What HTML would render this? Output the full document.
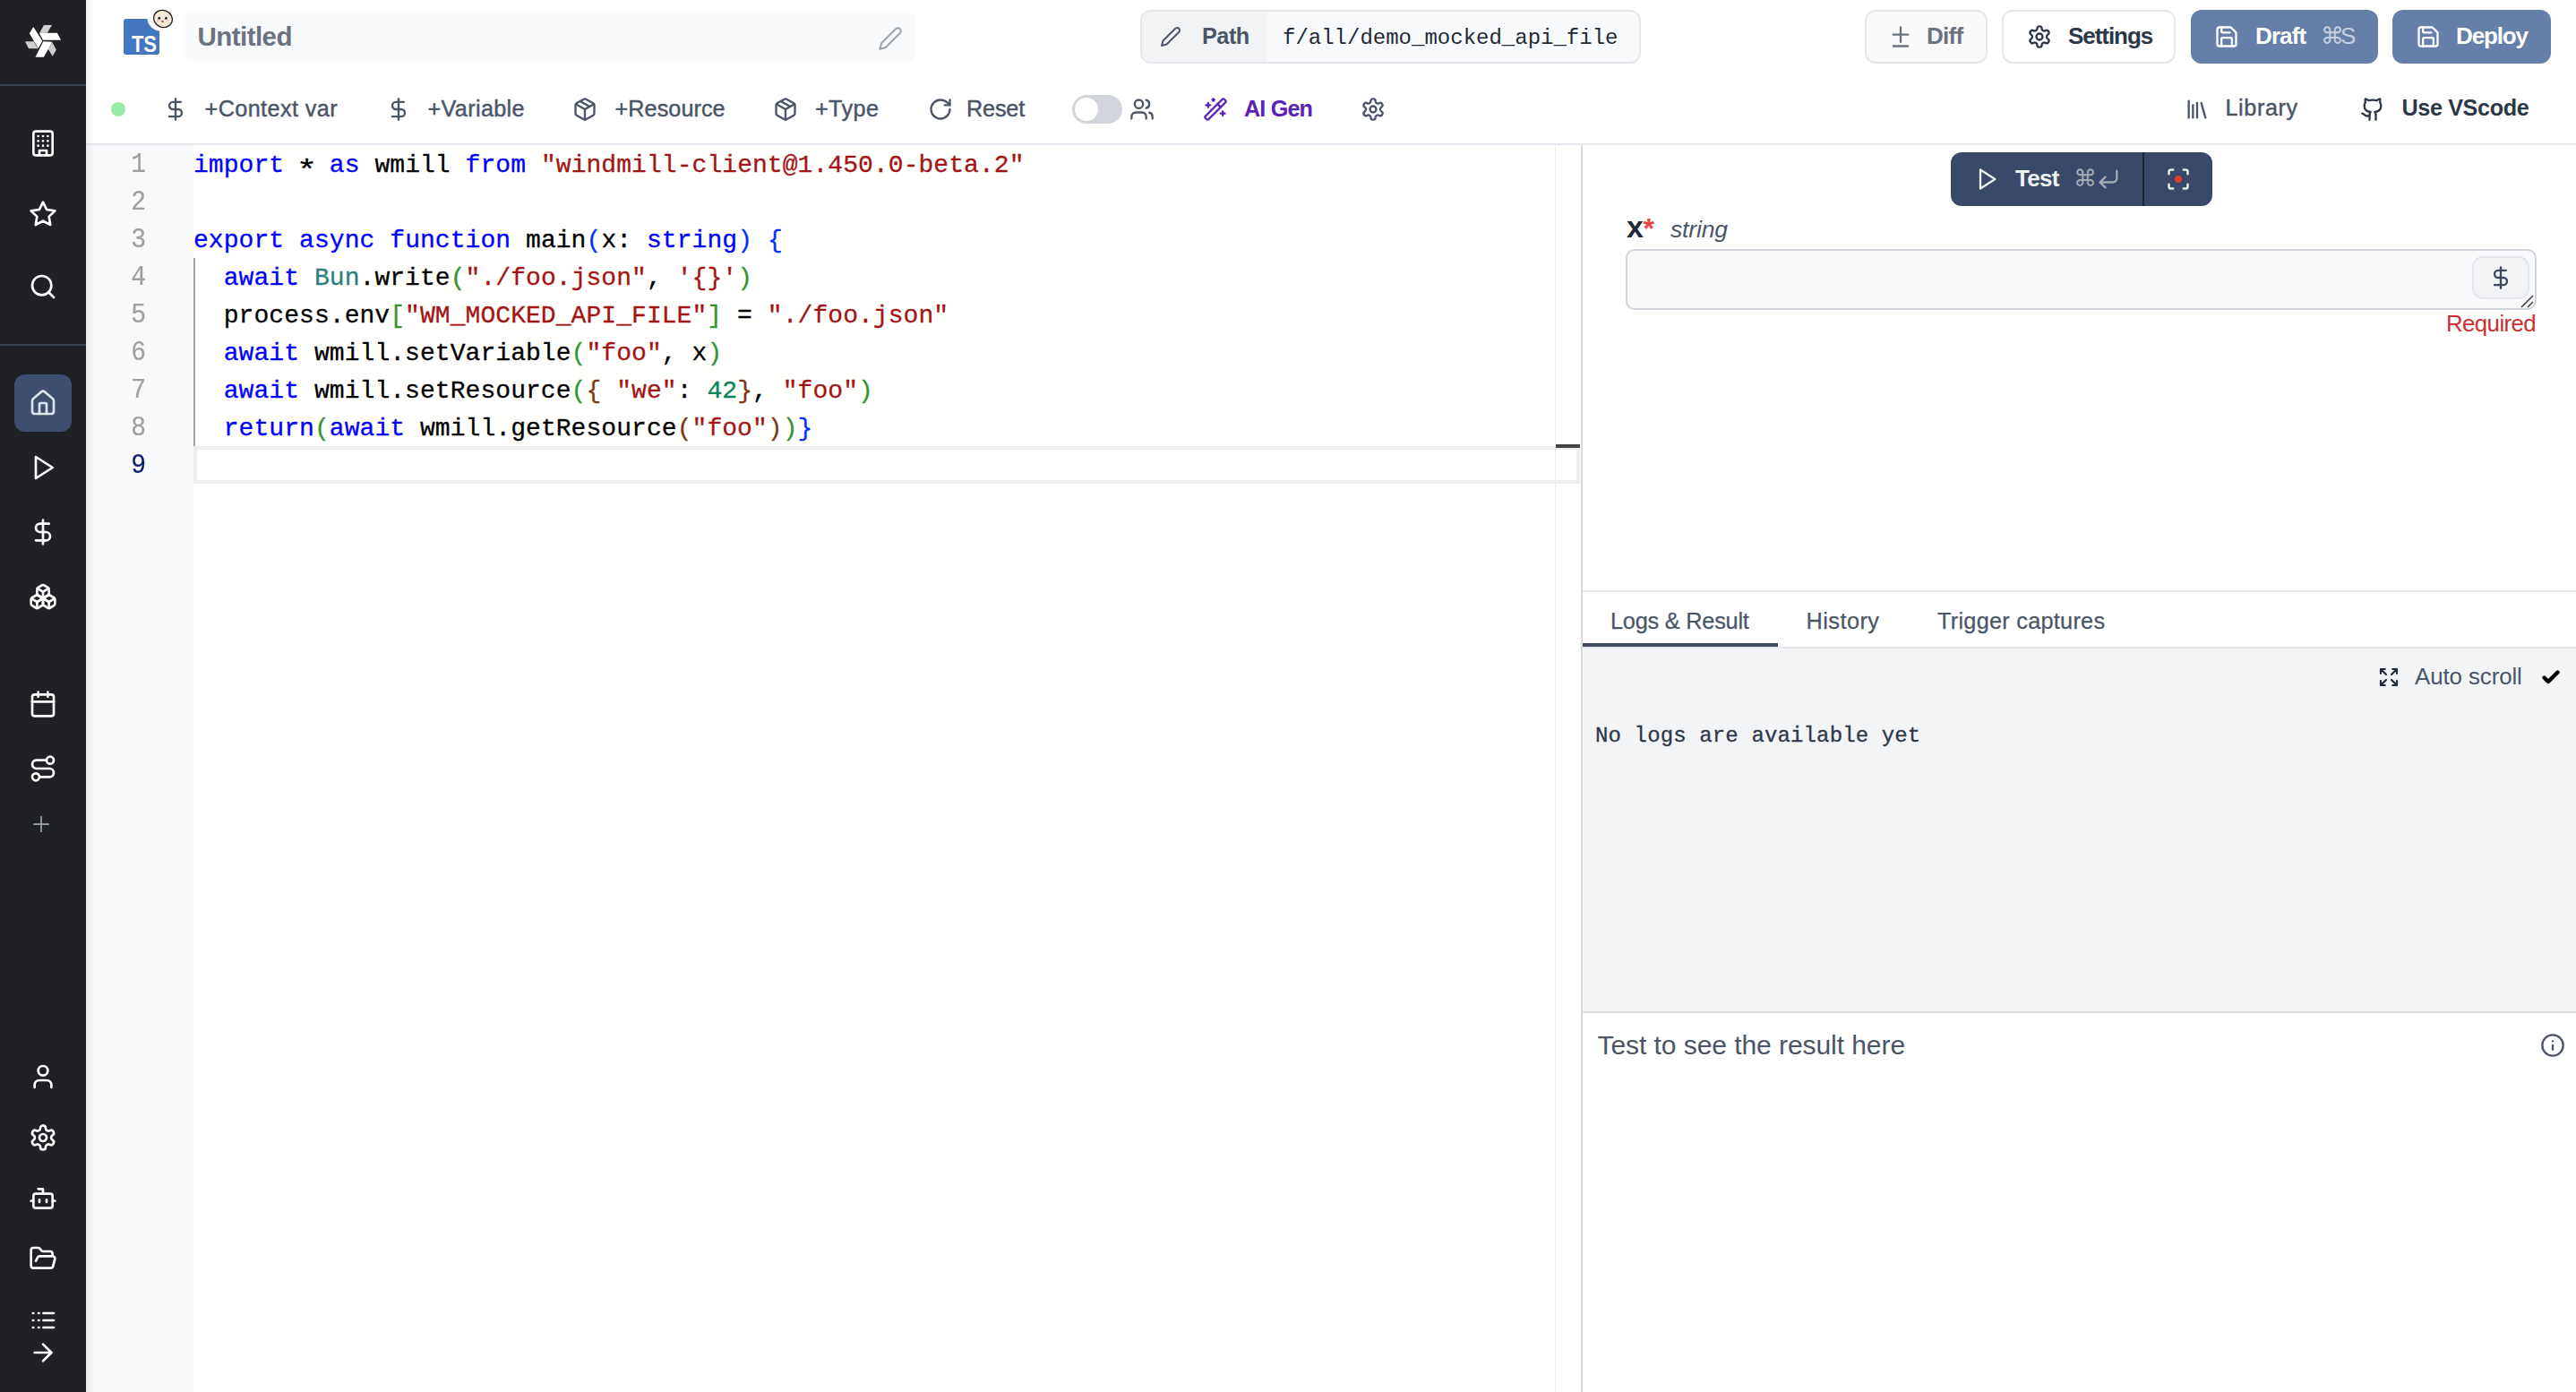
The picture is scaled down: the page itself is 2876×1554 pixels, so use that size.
<!DOCTYPE html>
<html><head><meta charset="utf-8">
<style>
*{box-sizing:border-box;margin:0;padding:0}
html,body{width:2876px;height:1554px;overflow:hidden;background:#fff;font-family:"Liberation Sans",sans-serif}
.a{position:absolute}
.t{position:absolute;white-space:nowrap;line-height:1}
.m{font-family:"Liberation Mono",monospace}
svg.i{position:absolute;fill:none;stroke:currentColor;stroke-linecap:round;stroke-linejoin:round}
#side{left:0;top:0;width:96px;height:1554px;background:#202125;box-shadow:2px 0 10px rgba(0,0,0,.08)}
.sep{position:absolute;left:0;width:96px;height:2px;background:#39404e}
.code{position:absolute;left:216px;font-family:"Liberation Mono",monospace;font-size:28px;line-height:42px;white-space:pre;color:#000;letter-spacing:0.06px;-webkit-text-stroke:0.3px currentColor}
.ln{position:absolute;left:96px;width:67px;text-align:right;font-family:"Liberation Mono",monospace;font-size:28px;line-height:42px;color:#a0a0a0;transform:scaleY(1.14);transform-origin:0 30px;-webkit-text-stroke:0.2px currentColor}
.k{color:#0000ff}.s{color:#a31515}.g{color:#319331}.b{color:#0431fa}.br{color:#7b3814}.n{color:#098658}.ty{color:#2e7f80}
</style></head><body>
<!-- sidebar -->
<div id="side" class="a">
  <svg class="a" style="left:24px;top:24px" width="48" height="44" viewBox="0 0 1519 1392">
    <polygon fill="#fff" points="420,190 740,690 590,950 280,420"/>
    <polygon fill="#cfcfcf" points="790,125 1075,125 910,400 640,400"/>
    <polygon fill="#fff" points="625,405 1260,405 1395,660 760,660"/>
    <polygon fill="#fff" points="770,700 1095,720 785,1260 490,1260"/>
    <polygon fill="#cfcfcf" points="1090,740 1230,1000 1095,1230 945,975"/>
    <polygon fill="#cfcfcf" points="125,700 430,700 580,955 255,955"/>
  </svg>
  <div class="sep" style="top:94px"></div>
  <svg class="i" style="left:32px;top:144px;color:#fff" width="32" height="32" viewBox="0 0 24 24" stroke-width="2"><rect width="16" height="20" x="4" y="2" rx="2" ry="2"/><path d="M9 22v-4h6v4"/><path d="M8 6h.01"/><path d="M16 6h.01"/><path d="M12 6h.01"/><path d="M12 10h.01"/><path d="M12 14h.01"/><path d="M16 10h.01"/><path d="M16 14h.01"/><path d="M8 10h.01"/><path d="M8 14h.01"/></svg>
  <svg class="i" style="left:32px;top:223px;color:#fff" width="32" height="32" viewBox="0 0 24 24" stroke-width="2"><polygon points="12 2 15.09 8.26 22 9.27 17 14.14 18.18 21.02 12 17.77 5.82 21.02 7 14.14 2 9.27 8.91 8.26 12 2"/></svg>
  <svg class="i" style="left:32px;top:304px;color:#fff" width="32" height="32" viewBox="0 0 24 24" stroke-width="2"><circle cx="11" cy="11" r="8"/><path d="m21 21-4.3-4.3"/></svg>
  <div class="sep" style="top:384px"></div>
  <div class="a" style="left:16px;top:418px;width:64px;height:64px;border-radius:12px;background:#3d4e6e"></div>
  <svg class="i" style="left:32px;top:434px;color:#dfe3ea" width="32" height="32" viewBox="0 0 24 24" stroke-width="2"><path d="M15 21v-8a1 1 0 0 0-1-1h-4a1 1 0 0 0-1 1v8"/><path d="M3 10a2 2 0 0 1 .709-1.528l7-5.999a2 2 0 0 1 2.582 0l7 5.999A2 2 0 0 1 21 10v9a2 2 0 0 1-2 2H5a2 2 0 0 1-2-2z"/></svg>
  <svg class="i" style="left:32px;top:506px;color:#fff" width="32" height="32" viewBox="0 0 24 24" stroke-width="2"><polygon points="6 3 20 12 6 21 6 3"/></svg>
  <svg class="i" style="left:32px;top:578px;color:#fff" width="32" height="32" viewBox="0 0 24 24" stroke-width="2"><line x1="12" x2="12" y1="2" y2="22"/><path d="M17 5H9.5a3.5 3.5 0 0 0 0 7h5a3.5 3.5 0 0 1 0 7H6"/></svg>
  <svg class="i" style="left:32px;top:650px;color:#fff" width="32" height="32" viewBox="0 0 24 24" stroke-width="2"><path d="M2.97 12.92A2 2 0 0 0 2 14.63v3.24a2 2 0 0 0 .97 1.71l3 1.8a2 2 0 0 0 2.06 0L12 19v-5.5l-5-3-4.03 2.42Z"/><path d="m7 16.5-4.74-2.85"/><path d="m7 16.5 5-3"/><path d="M7 16.5v5.17"/><path d="M12 13.5V19l3.97 2.38a2 2 0 0 0 2.06 0l3-1.8a2 2 0 0 0 .97-1.71v-3.24a2 2 0 0 0-.97-1.71L17 10.5l-5 3Z"/><path d="m17 16.5-5-3"/><path d="m17 16.5 4.74-2.85"/><path d="M17 16.5v5.17"/><path d="M7.97 4.42A2 2 0 0 0 7 6.13v4.37l5 3 5-3V6.13a2 2 0 0 0-.97-1.71l-3-1.8a2 2 0 0 0-2.06 0l-3 1.8Z"/><path d="M12 8 7.26 5.15"/><path d="m12 8 4.74-2.85"/><path d="M12 13.5V8"/></svg>
  <svg class="i" style="left:32px;top:770px;color:#fff" width="32" height="32" viewBox="0 0 24 24" stroke-width="2"><path d="M8 2v4"/><path d="M16 2v4"/><rect width="18" height="18" x="3" y="4" rx="2"/><path d="M3 10h18"/></svg>
  <svg class="i" style="left:32px;top:842px;color:#fff" width="32" height="32" viewBox="0 0 24 24" stroke-width="2"><circle cx="6" cy="19" r="3"/><path d="M9 19h8.5a3.5 3.5 0 0 0 0-7h-11a3.5 3.5 0 0 1 0-7H15"/><circle cx="18" cy="5" r="3"/></svg>
  <svg class="i" style="left:32px;top:906px;color:#9ca3af" width="28" height="28" viewBox="0 0 24 24" stroke-width="1.5"><path d="M5 12h14"/><path d="M12 5v14"/></svg>
  <svg class="i" style="left:32px;top:1186px;color:#fff" width="32" height="32" viewBox="0 0 24 24" stroke-width="2"><path d="M19 21v-2a4 4 0 0 0-4-4H9a4 4 0 0 0-4 4v2"/><circle cx="12" cy="7" r="4"/></svg>
  <svg class="i" style="left:32px;top:1254px;color:#fff" width="32" height="32" viewBox="0 0 24 24" stroke-width="2"><path d="M12.22 2h-.44a2 2 0 0 0-2 2v.18a2 2 0 0 1-1 1.73l-.43.25a2 2 0 0 1-2 0l-.15-.08a2 2 0 0 0-2.73.73l-.22.38a2 2 0 0 0 .73 2.73l.15.1a2 2 0 0 1 1 1.72v.51a2 2 0 0 1-1 1.74l-.15.09a2 2 0 0 0-.73 2.73l.22.38a2 2 0 0 0 2.73.73l.15-.08a2 2 0 0 1 2 0l.43.25a2 2 0 0 1 1 1.73V20a2 2 0 0 0 2 2h.44a2 2 0 0 0 2-2v-.18a2 2 0 0 1 1-1.73l.43-.25a2 2 0 0 1 2 0l.15.08a2 2 0 0 0 2.73-.73l.22-.39a2 2 0 0 0-.73-2.73l-.15-.08a2 2 0 0 1-1-1.74v-.5a2 2 0 0 1 1-1.74l.15-.09a2 2 0 0 0 .73-2.73l-.22-.38a2 2 0 0 0-2.73-.73l-.15.08a2 2 0 0 1-2 0l-.43-.25a2 2 0 0 1-1-1.73V4a2 2 0 0 0-2-2z"/><circle cx="12" cy="12" r="3"/></svg>
  <svg class="i" style="left:32px;top:1322px;color:#fff" width="32" height="32" viewBox="0 0 24 24" stroke-width="2"><path d="M12 8V4H8"/><rect width="16" height="12" x="4" y="8" rx="2"/><path d="M2 14h2"/><path d="M20 14h2"/><path d="M15 13v2"/><path d="M9 13v2"/></svg>
  <svg class="i" style="left:32px;top:1389px;color:#fff" width="32" height="32" viewBox="0 0 24 24" stroke-width="2"><path d="m6 14 1.5-2.9A2 2 0 0 1 9.24 10H20a2 2 0 0 1 1.94 2.5l-1.54 6a2 2 0 0 1-1.95 1.5H4a2 2 0 0 1-2-2V5a2 2 0 0 1 2-2h3.9a2 2 0 0 1 1.69.9l.81 1.2a2 2 0 0 0 1.67.9H18a2 2 0 0 1 2 2v2"/></svg>
  <svg class="i" style="left:32px;top:1458px;color:#fff" width="32" height="32" viewBox="0 0 24 24" stroke-width="2"><path d="M3.6 6h.4M8.3 6h.4M12.3 6h8.7M3.6 12h.4M8.3 12h.4M12.3 12h8.7M3.6 18h.4M8.3 18h.4M12.3 18h8.7"/></svg>
  <svg class="i" style="left:32px;top:1494px;color:#fff" width="32" height="32" viewBox="0 0 24 24" stroke-width="2"><path d="M5 12h14"/><path d="m12 5 7 7-7 7"/></svg>
</div>
<div class="a" style="left:96px;top:0;width:2780px;height:161px;background:#fff"></div>
<div class="a" style="left:96px;top:160px;width:2780px;height:2px;background:#e4e6eb"></div>
<div class="a" style="left:96px;top:162px;width:2780px;height:6px;background:linear-gradient(rgba(0,0,0,.035),rgba(0,0,0,0))"></div>
<svg class="a" style="left:132px;top:6px" width="68" height="60" viewBox="0 0 68 60">
<defs><mask id="nm"><rect x="0" y="0" width="68" height="60" fill="#fff"/><circle cx="47" cy="14" r="14.5" fill="#000"/></mask></defs>
<rect x="6" y="15" width="40" height="40" rx="3" fill="#4477c1" mask="url(#nm)"/>
<text x="14.9" y="51.7" font-family="Liberation Sans" font-weight="700" font-size="26.6" fill="#fff" textLength="28.2" lengthAdjust="spacingAndGlyphs">TS</text>
<ellipse cx="50" cy="15" rx="10.6" ry="9.4" transform="rotate(20 50 15)" fill="#f4ead8" stroke="#1a1a1a" stroke-width="1.3"/>
<ellipse cx="45.8" cy="14.3" rx="1.3" ry="1.5" fill="#111"/><ellipse cx="53.4" cy="14.3" rx="1.3" ry="1.5" fill="#111"/>
<ellipse cx="44.2" cy="16.8" rx="1.6" ry=".8" fill="#f3b6c8"/><ellipse cx="55" cy="16.8" rx="1.6" ry=".8" fill="#f3b6c8"/>
<path d="M47.6 17.2h3.6l-1.8 2.4z" fill="#c8242c"/>
</svg>
<div class="a" style="left:204px;top:13px;width:819px;height:56px;border-radius:12px;background:#f9fafb"></div>
<div id="untitled" class="t" style="left:220.50px;top:25.83px;font-size:29.5px;color:#6b7280;font-weight:700;font-family:'Liberation Sans',sans-serif;letter-spacing:-0.543px;">Untitled</div>
<svg class="i" style="left:980px;top:29px;color:#9ca3af;" width="28" height="28" viewBox="0 0 24 24" stroke-width="1.75"><path d="M17 3a2.85 2.83 0 1 1 4 4L7.5 20.5 2 22l1.5-5.5Z"/></svg>
<div class="a" style="left:1273px;top:11px;width:559px;height:60px;border-radius:12px;border:2px solid #e5e7eb;background:#f9fafb;overflow:hidden"><div class="a" style="left:0;top:0;width:140px;height:56px;background:#f2f3f5"></div></div>
<svg class="i" style="left:1295px;top:29px;color:#4a5567;" width="24" height="24" viewBox="0 0 24 24" stroke-width="2"><path d="M17 3a2.85 2.83 0 1 1 4 4L7.5 20.5 2 22l1.5-5.5Z"/></svg>
<div id="path" class="t" style="left:1342.00px;top:27.58px;font-size:25.3px;color:#4a5567;font-weight:700;font-family:'Liberation Sans',sans-serif;letter-spacing:-0.533px;">Path</div>
<div id="pathv" class="t" style="left:1432.00px;top:30.60px;font-size:24px;color:#1f2937;font-weight:400;font-family:'Liberation Mono',monospace;letter-spacing:0.000px;">f/all/demo_mocked_api_file</div>
<div class="a" style="left:2082px;top:11px;width:137px;height:60px;border-radius:12px;border:2px solid #e5e7eb;background:#fafafa"></div>
<svg class="i" style="left:2108px;top:27px;color:#6b7280;" width="28" height="28" viewBox="0 0 24 24" stroke-width="2"><path d="M12 3v14"/><path d="M5 10h14"/><path d="M5 21h14"/></svg>
<div id="diff" class="t" style="left:2151.00px;top:26.79px;font-size:26px;color:#6b7280;font-weight:700;font-family:'Liberation Sans',sans-serif;letter-spacing:-0.733px;">Diff</div>
<div class="a" style="left:2235px;top:11px;width:194px;height:60px;border-radius:12px;border:2px solid #e5e7eb;background:#fff"></div>
<svg class="i" style="left:2263px;top:27px;color:#2d3748;" width="28" height="28" viewBox="0 0 24 24" stroke-width="2"><path d="M12.22 2h-.44a2 2 0 0 0-2 2v.18a2 2 0 0 1-1 1.73l-.43.25a2 2 0 0 1-2 0l-.15-.08a2 2 0 0 0-2.73.73l-.22.38a2 2 0 0 0 .73 2.73l.15.1a2 2 0 0 1 1 1.72v.51a2 2 0 0 1-1 1.74l-.15.09a2 2 0 0 0-.73 2.73l.22.38a2 2 0 0 0 2.73.73l.15-.08a2 2 0 0 1 2 0l.43.25a2 2 0 0 1 1 1.73V20a2 2 0 0 0 2 2h.44a2 2 0 0 0 2-2v-.18a2 2 0 0 1 1-1.73l.43-.25a2 2 0 0 1 2 0l.15.08a2 2 0 0 0 2.73-.73l.22-.39a2 2 0 0 0-.73-2.73l-.15-.08a2 2 0 0 1-1-1.74v-.5a2 2 0 0 1 1-1.74l.15-.09a2 2 0 0 0 .73-2.73l-.22-.38a2 2 0 0 0-2.73-.73l-.15.08a2 2 0 0 1-2 0l-.43-.25a2 2 0 0 1-1-1.73V4a2 2 0 0 0-2-2z"/><circle cx="12" cy="12" r="3"/></svg>
<div id="settings" class="t" style="left:2309.00px;top:26.99px;font-size:26px;color:#2d3748;font-weight:700;font-family:'Liberation Sans',sans-serif;letter-spacing:-1.057px;">Settings</div>
<div class="a" style="left:2446px;top:11px;width:209px;height:60px;border-radius:12px;background:#6480a9"></div>
<svg class="i" style="left:2472px;top:27px;color:#fff;" width="28" height="28" viewBox="0 0 24 24" stroke-width="2"><path d="M15.2 3a2 2 0 0 1 1.4.6l3.8 3.8a2 2 0 0 1 .6 1.4V19a2 2 0 0 1-2 2H5a2 2 0 0 1-2-2V5a2 2 0 0 1 2-2z"/><path d="M17 21v-7a1 1 0 0 0-1-1H8a1 1 0 0 0-1 1v7"/><path d="M7 3v4a1 1 0 0 0 1 1h7"/></svg>
<div id="draft" class="t" style="left:2518.00px;top:26.99px;font-size:26px;color:#fff;font-weight:700;font-family:'Liberation Sans',sans-serif;letter-spacing:-0.900px;">Draft</div>
<div id="draftk" class="t" style="left:2591.00px;top:26.99px;font-size:26px;color:#c5cfdf;font-weight:400;font-family:'Liberation Sans',sans-serif;letter-spacing:-4.000px;">&#8984;S</div>
<div class="a" style="left:2671px;top:11px;width:177px;height:60px;border-radius:12px;background:#6480a9"></div>
<svg class="i" style="left:2697px;top:27px;color:#fff;" width="28" height="28" viewBox="0 0 24 24" stroke-width="2"><path d="M15.2 3a2 2 0 0 1 1.4.6l3.8 3.8a2 2 0 0 1 .6 1.4V19a2 2 0 0 1-2 2H5a2 2 0 0 1-2-2V5a2 2 0 0 1 2-2z"/><path d="M17 21v-7a1 1 0 0 0-1-1H8a1 1 0 0 0-1 1v7"/><path d="M7 3v4a1 1 0 0 0 1 1h7"/></svg>
<div id="deploy" class="t" style="left:2742.00px;top:26.99px;font-size:26px;color:#fff;font-weight:700;font-family:'Liberation Sans',sans-serif;letter-spacing:-1.120px;">Deploy</div>
<div class="a" style="left:124px;top:114px;width:16px;height:16px;border-radius:8px;background:#9ceaab"></div>
<div class="a" style="left:96px;top:0;width:10px;height:1554px;background:linear-gradient(90deg,rgba(0,0,0,.06),rgba(0,0,0,0));z-index:5"></div>
<svg class="i" style="left:182px;top:108px;color:#4a5567;" width="28" height="28" viewBox="0 0 24 24" stroke-width="2"><line x1="12" x2="12" y1="2" y2="22"/><path d="M17 5H9.5a3.5 3.5 0 0 0 0 7h5a3.5 3.5 0 0 1 0 7H6"/></svg>
<div id="ctx" class="t" style="left:228.50px;top:108.87px;font-size:25.2px;color:#4a5567;font-weight:400;font-family:'Liberation Sans',sans-serif;letter-spacing:0.418px;-webkit-text-stroke:0.45px #4a5567;">+Context var</div>
<svg class="i" style="left:431px;top:108px;color:#4a5567;" width="28" height="28" viewBox="0 0 24 24" stroke-width="2"><line x1="12" x2="12" y1="2" y2="22"/><path d="M17 5H9.5a3.5 3.5 0 0 0 0 7h5a3.5 3.5 0 0 1 0 7H6"/></svg>
<div id="var" class="t" style="left:477.50px;top:108.87px;font-size:25.2px;color:#4a5567;font-weight:400;font-family:'Liberation Sans',sans-serif;letter-spacing:0.350px;-webkit-text-stroke:0.45px #4a5567;">+Variable</div>
<svg class="i" style="left:639px;top:108px;color:#4a5567;" width="28" height="28" viewBox="0 0 24 24" stroke-width="2"><path d="m7.5 4.27 9 5.15"/><path d="M21 8a2 2 0 0 0-1-1.73l-7-4a2 2 0 0 0-2 0l-7 4A2 2 0 0 0 3 8v8a2 2 0 0 0 1 1.73l7 4a2 2 0 0 0 2 0l7-4A2 2 0 0 0 21 16Z"/><path d="m3.3 7 8.7 5 8.7-5"/><path d="M12 22V12"/></svg>
<div id="res" class="t" style="left:686.50px;top:108.87px;font-size:25.2px;color:#4a5567;font-weight:400;font-family:'Liberation Sans',sans-serif;letter-spacing:0.075px;-webkit-text-stroke:0.45px #4a5567;">+Resource</div>
<svg class="i" style="left:863px;top:108px;color:#4a5567;" width="28" height="28" viewBox="0 0 24 24" stroke-width="2"><path d="m7.5 4.27 9 5.15"/><path d="M21 8a2 2 0 0 0-1-1.73l-7-4a2 2 0 0 0-2 0l-7 4A2 2 0 0 0 3 8v8a2 2 0 0 0 1 1.73l7 4a2 2 0 0 0 2 0l7-4A2 2 0 0 0 21 16Z"/><path d="m3.3 7 8.7 5 8.7-5"/><path d="M12 22V12"/></svg>
<div id="type" class="t" style="left:910.00px;top:108.87px;font-size:25.2px;color:#4a5567;font-weight:400;font-family:'Liberation Sans',sans-serif;letter-spacing:0.400px;-webkit-text-stroke:0.45px #4a5567;">+Type</div>
<svg class="i" style="left:1036px;top:108px;color:#4a5567;" width="28" height="28" viewBox="0 0 24 24" stroke-width="2"><path d="M21 12a9 9 0 1 1-9-9c2.52 0 4.93 1 6.74 2.74L21 8"/><path d="M21 3v5h-5"/></svg>
<div id="reset" class="t" style="left:1079.00px;top:108.87px;font-size:25.2px;color:#4a5567;font-weight:400;font-family:'Liberation Sans',sans-serif;letter-spacing:-0.150px;-webkit-text-stroke:0.45px #4a5567;">Reset</div>
<div class="a" style="left:1197px;top:106px;width:56px;height:32px;border-radius:16px;background:#d1d5db"></div>
<div class="a" style="left:1200px;top:109px;width:26px;height:26px;border-radius:13px;background:#fff"></div>
<svg class="i" style="left:1261px;top:108px;color:#4a5567;" width="28" height="28" viewBox="0 0 24 24" stroke-width="2"><path d="M16 21v-2a4 4 0 0 0-4-4H6a4 4 0 0 0-4 4v2"/><circle cx="9" cy="7" r="4"/><path d="M22 21v-2a4 4 0 0 0-3-3.87"/><path d="M16 3.13a4 4 0 0 1 0 7.75"/></svg>
<svg class="i" style="left:1343px;top:108px;color:#5b21b6;" width="28" height="28" viewBox="0 0 24 24" stroke-width="2"><path d="m21.64 3.64-1.28-1.28a1.21 1.21 0 0 0-1.72 0L2.36 18.64a1.21 1.21 0 0 0 0 1.72l1.28 1.28a1.2 1.2 0 0 0 1.72 0L21.64 5.36a1.2 1.2 0 0 0 0-1.72"/><path d="m14 7 3 3"/><path d="M5 6v4"/><path d="M19 14v4"/><path d="M10 2v2"/><path d="M7 8H3"/><path d="M21 16h-4"/><path d="M11 3H9"/></svg>
<div id="aigen" class="t" style="left:1389.00px;top:108.87px;font-size:25.2px;color:#5b21b6;font-weight:700;font-family:'Liberation Sans',sans-serif;letter-spacing:-0.840px;">AI Gen</div>
<svg class="i" style="left:1519px;top:108px;color:#4a5567;" width="28" height="28" viewBox="0 0 24 24" stroke-width="2"><path d="M12.22 2h-.44a2 2 0 0 0-2 2v.18a2 2 0 0 1-1 1.73l-.43.25a2 2 0 0 1-2 0l-.15-.08a2 2 0 0 0-2.73.73l-.22.38a2 2 0 0 0 .73 2.73l.15.1a2 2 0 0 1 1 1.72v.51a2 2 0 0 1-1 1.74l-.15.09a2 2 0 0 0-.73 2.73l.22.38a2 2 0 0 0 2.73.73l.15-.08a2 2 0 0 1 2 0l.43.25a2 2 0 0 1 1 1.73V20a2 2 0 0 0 2 2h.44a2 2 0 0 0 2-2v-.18a2 2 0 0 1 1-1.73l.43-.25a2 2 0 0 1 2 0l.15.08a2 2 0 0 0 2.73-.73l.22-.39a2 2 0 0 0-.73-2.73l-.15-.08a2 2 0 0 1-1-1.74v-.5a2 2 0 0 1 1-1.74l.15-.09a2 2 0 0 0 .73-2.73l-.22-.38a2 2 0 0 0-2.73-.73l-.15.08a2 2 0 0 1-2 0l-.43-.25a2 2 0 0 1-1-1.73V4a2 2 0 0 0-2-2z"/><circle cx="12" cy="12" r="3"/></svg>
<svg class="i" style="left:2439px;top:108px;color:#4a5567;" width="28" height="28" viewBox="0 0 24 24" stroke-width="2"><path d="m16 6 4 14"/><path d="M12 6v14"/><path d="M8 8v12"/><path d="M4 4v16"/></svg>
<div id="lib" class="t" style="left:2484.50px;top:108.37px;font-size:25.2px;color:#4a5567;font-weight:400;font-family:'Liberation Sans',sans-serif;letter-spacing:0.600px;-webkit-text-stroke:0.45px #4a5567;">Library</div>
<svg class="i" style="left:2635px;top:108px;color:#2d3748;" width="28" height="28" viewBox="0 0 24 24" stroke-width="2"><path d="M15 22v-4a4.8 4.8 0 0 0-1-3.5c3 0 6-2 6-5.5.08-1.25-.27-2.48-1-3.5.28-1.150.28-2.35 0-3.5 0 0-1 0-3 1.5-2.64-.5-5.36-.5-8 0C6 2 5 2 5 2c-.3 1.15-.3 2.35 0 3.5A5.403 5.403 0 0 0 4 9c0 3.5 3 5.5 6 5.5-.39.49-.68 1.05-.85 1.65-.17.6-.22 1.23-.15 1.85v4"/><path d="M9 18c-4.51 2-5-2-7-2"/></svg>
<div id="vscode" class="t" style="left:2681.50px;top:108.37px;font-size:25.2px;color:#2d3748;font-weight:700;font-family:'Liberation Sans',sans-serif;letter-spacing:-0.378px;">Use VScode</div>
<div class="a" style="left:96px;top:162px;width:1671px;height:1392px;background:#fffffe"></div>
<div class="a" style="left:96px;top:162px;width:120px;height:1392px;background:#f8f9fb"></div>
<div class="a" style="left:216px;top:498px;width:1548px;height:42px;border:4px solid #eeeeee"></div>
<div class="ln" style="top:164px;color:#a0a0a0">1</div>
<div class="code" style="top:164px"><span class="k">import</span> <span style="display:inline-block;transform:translateY(6.5px) scale(1.4,1.15)">*</span> <span class="k">as</span> wmill <span class="k">from</span> <span class="s">"windmill-client@1.450.0-beta.2"</span></div>
<div class="ln" style="top:206px;color:#a0a0a0">2</div>
<div class="code" style="top:206px"></div>
<div class="ln" style="top:248px;color:#a0a0a0">3</div>
<div class="code" style="top:248px"><span class="k">export</span> <span class="k">async</span> <span class="k">function</span> main<span class="b">(</span>x: <span class="k">string</span><span class="b">)</span> <span class="b">{</span></div>
<div class="ln" style="top:290px;color:#a0a0a0">4</div>
<div class="code" style="top:290px">  <span class="k">await</span> <span class="ty">Bun</span>.write<span class="g">(</span><span class="s">"./foo.json"</span>, <span class="s">'{}'</span><span class="g">)</span></div>
<div class="ln" style="top:332px;color:#a0a0a0">5</div>
<div class="code" style="top:332px">  process.env<span class="g">[</span><span class="s">"WM_MOCKED_API_FILE"</span><span class="g">]</span> = <span class="s">"./foo.json"</span></div>
<div class="ln" style="top:374px;color:#a0a0a0">6</div>
<div class="code" style="top:374px">  <span class="k">await</span> wmill.setVariable<span class="g">(</span><span class="s">"foo"</span>, x<span class="g">)</span></div>
<div class="ln" style="top:416px;color:#a0a0a0">7</div>
<div class="code" style="top:416px">  <span class="k">await</span> wmill.setResource<span class="g">(</span><span class="br">{</span> <span class="s">"we"</span>: <span class="n">42</span><span class="br">}</span>, <span class="s">"foo"</span><span class="g">)</span></div>
<div class="ln" style="top:458px;color:#a0a0a0">8</div>
<div class="code" style="top:458px">  <span class="k">return</span><span class="g">(</span><span class="k">await</span> wmill.getResource<span class="br">(</span><span class="s">"foo"</span><span class="br">)</span><span class="g">)</span><span class="b">}</span></div>
<div class="ln" style="top:500px;color:#0b216f">9</div>
<div class="code" style="top:500px"></div>
<div class="a" style="left:216px;top:288px;width:2px;height:210px;background:#a3a3a3"></div>
<div class="a" style="left:1736px;top:162px;width:1px;height:1392px;background:#ececec"></div>
<div class="a" style="left:1737px;top:496px;width:27px;height:4px;background:#444"></div>
<div class="a" style="left:1765px;top:162px;width:2px;height:1392px;background:#dadada"></div>
<div class="a" style="left:1767px;top:162px;width:1109px;height:1392px;background:#fff"></div>
<div class="a" style="left:2178px;top:170px;width:292px;height:60px;border-radius:12px;background:#3a4969"></div>
<div class="a" style="left:2392px;top:170px;width:2px;height:60px;background:#1f2433"></div>
<svg class="i" style="left:2204px;top:186px;color:#f3f4f6;" width="28" height="28" viewBox="0 0 24 24" stroke-width="2"><polygon points="6 3 20 12 6 21 6 3"/></svg>
<div id="test" class="t" style="left:2250.00px;top:185.99px;font-size:26px;color:#f0f1f3;font-weight:700;font-family:'Liberation Sans',sans-serif;letter-spacing:-0.667px;">Test</div>
<div id="testk" class="t" style="left:2315.00px;top:185.99px;font-size:26px;color:#a3aab8;font-weight:400;font-family:'Liberation Sans',sans-serif;letter-spacing:0.000px;">&#8984;</div>
<svg class="i" style="left:2340px;top:186px;color:#a3aab8;" width="28" height="28" viewBox="0 0 24 24" stroke-width="2"><polyline points="9 10 4 15 9 20"/><path d="M20 4v7a4 4 0 0 1-4 4H4"/></svg>
<svg class="i" style="left:2418px;top:186px;color:#e5e7eb;" width="28" height="28" viewBox="0 0 24 24" stroke-width="2.2"><path d="M3 7V5a2 2 0 0 1 2-2h2"/><path d="M17 3h2a2 2 0 0 1 2 2v2"/><path d="M21 17v2a2 2 0 0 1-2 2h-2"/><path d="M7 21H5a2 2 0 0 1-2-2v-2"/></svg>
<div class="a" style="left:2428px;top:196px;width:8px;height:8px;border-radius:4px;background:#e0413a"></div>
<div id="x" class="t" style="left:1816.00px;top:236.22px;font-size:34px;color:#222a38;font-weight:700;font-family:'Liberation Sans',sans-serif;letter-spacing:0.000px;">x</div>
<div id="star" class="t" style="left:1834.50px;top:238.91px;font-size:32px;color:#ef4444;font-weight:700;font-family:'Liberation Sans',sans-serif;letter-spacing:0.000px;">*</div>
<div id="string" class="t" style="left:1865.00px;top:242.57px;font-size:26.5px;color:#4a5567;font-weight:400;font-family:'Liberation Sans',sans-serif;letter-spacing:-0.160px;font-style:italic;">string</div>
<div class="a" style="left:1815px;top:278px;width:1017px;height:68px;border-radius:10px;border:2px solid #d1d5db;background:#f9fafb"></div>
<div class="a" style="left:2760px;top:286px;width:64px;height:48px;border-radius:12px;border:2px solid #e5e7eb;background:#f2f3f5"></div>
<svg class="i" style="left:2778px;top:296px;color:#3f4a5e;" width="28" height="28" viewBox="0 0 24 24" stroke-width="2"><line x1="12" x2="12" y1="2" y2="22"/><path d="M17 5H9.5a3.5 3.5 0 0 0 0 7h5a3.5 3.5 0 0 1 0 7H6"/></svg>
<svg class="a" style="left:2812px;top:328px" width="18" height="18" viewBox="0 0 18 18"><path d="M3 15L16 2M10 15l6-6" stroke="#444" stroke-width="1.6" fill="none"/></svg>
<div id="required" class="t" style="left:2731.00px;top:349.08px;font-size:25.9px;color:#c93131;font-weight:400;font-family:'Liberation Sans',sans-serif;letter-spacing:-0.629px;">Required</div>
<div class="a" style="left:1767px;top:659px;width:1109px;height:2px;background:#e5e7eb"></div>
<div id="tab1" class="t" style="left:1798.00px;top:680.58px;font-size:25.3px;color:#4a5567;font-weight:400;font-family:'Liberation Sans',sans-serif;letter-spacing:-0.217px;-webkit-text-stroke:0.25px #4a5567;">Logs &amp; Result</div>
<div id="tab2" class="t" style="left:2016.50px;top:680.58px;font-size:25.3px;color:#4a5567;font-weight:400;font-family:'Liberation Sans',sans-serif;letter-spacing:0.467px;-webkit-text-stroke:0.25px #4a5567;">History</div>
<div id="tab3" class="t" style="left:2163.00px;top:680.58px;font-size:25.3px;color:#4a5567;font-weight:400;font-family:'Liberation Sans',sans-serif;letter-spacing:0.253px;-webkit-text-stroke:0.25px #4a5567;">Trigger captures</div>
<div class="a" style="left:1767px;top:722px;width:1109px;height:2px;background:#e5e7eb"></div>
<div class="a" style="left:1767px;top:718px;width:218px;height:4px;background:#404b5e"></div>
<div class="a" style="left:1767px;top:724px;width:1109px;height:405px;background:#f3f4f6"></div>
<svg class="i" style="left:2655px;top:744px;color:#1f2937;" width="24" height="24" viewBox="0 0 24 24" stroke-width="2.2"><path d="m21 21-6-6m6 6v-4.8m0 4.8h-4.8"/><path d="M3 16.2V21m0 0h4.8M3 21l6-6"/><path d="M21 7.8V3m0 0h-4.8M21 3l-6 6"/><path d="M3 7.8V3m0 0h4.8M3 3l6 6"/></svg>
<div id="autoscroll" class="t" style="left:2696.00px;top:743.08px;font-size:25.9px;color:#4a5567;font-weight:400;font-family:'Liberation Sans',sans-serif;letter-spacing:-0.100px;">Auto scroll</div>
<svg class="a" style="left:2836px;top:746px" width="24" height="20" viewBox="0 0 24 20"><path d="M4.5 10.5l4.5 4.5L19.5 4.5" stroke="#000" stroke-width="4.4" fill="none" stroke-linecap="round" stroke-linejoin="round"/></svg>
<div id="nologs" class="t" style="left:1781.00px;top:809.60px;font-size:24px;color:#2d3748;font-weight:400;font-family:'Liberation Mono',monospace;letter-spacing:0.133px;-webkit-text-stroke:0.3px #2d3748;">No logs are available yet</div>
<div class="a" style="left:1767px;top:1129px;width:1109px;height:2px;background:#dcdcdc"></div>
<div id="result" class="t" style="left:1783.50px;top:1151.70px;font-size:30px;color:#4a5567;font-weight:400;font-family:'Liberation Sans',sans-serif;letter-spacing:-0.062px;">Test to see the result here</div>
<svg class="i" style="left:2836px;top:1153px;color:#4a5567;" width="28" height="28" viewBox="0 0 24 24" stroke-width="2"><circle cx="12" cy="12" r="10"/><path d="M12 16v-4"/><path d="M12 8h.01"/></svg>
</body></html>
